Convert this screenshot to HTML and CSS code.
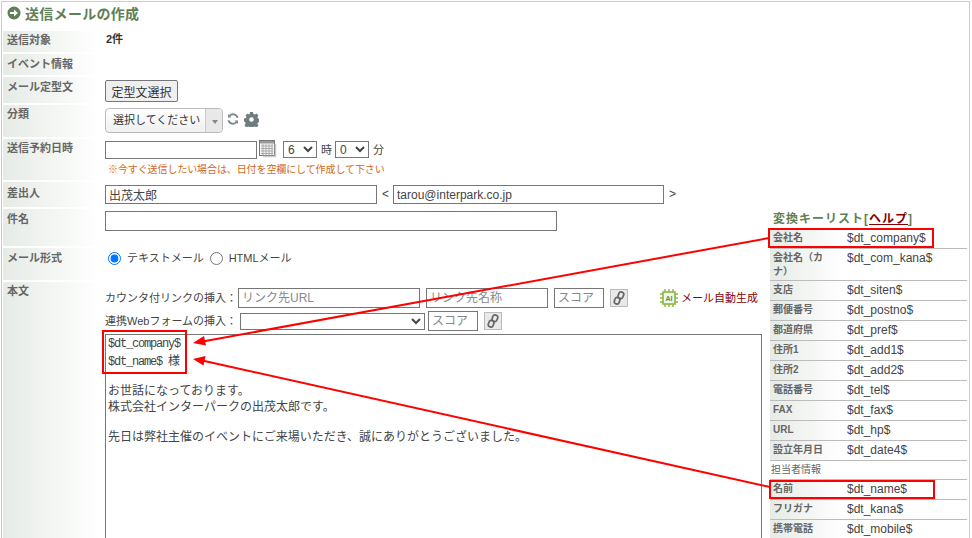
FILE: index.html
```html
<!DOCTYPE html>
<html lang="ja">
<head>
<meta charset="utf-8">
<title>送信メールの作成</title>
<link rel="stylesheet" href="styles.css">
</head>
<body>
<div class="page">
  <h1 class="title"><svg class="title-icon" width="14" height="14" viewBox="0 0 14 14"><circle cx="7" cy="7" r="6.5" fill="#5f7f57"/><path d="M3 6h4V3.6L11 7l-4 3.4V8H3z" fill="#fff"/></svg>送信メールの作成</h1>

  <div class="row r1"><div class="lbl">送信対象</div><div class="val strong">2件</div></div>
  <div class="row r2"><div class="lbl">イベント情報</div><div class="val"></div></div>
  <div class="row r3"><div class="lbl">メール定型文</div><div class="val"><button class="btn" type="button">定型文選択</button></div></div>
  <div class="row r4"><div class="lbl">分類</div><div class="val line">
    <div class="combo"><span class="combo-text">選択してください</span><span class="combo-arrow"></span></div>
    <svg class="ic-refresh" width="12" height="12" viewBox="0 0 12 12"><path d="M10.6 4.8A4.7 4.7 0 0 0 2.4 3" fill="none" stroke="#7d8a8c" stroke-width="1.8"/><path d="M1 1v3.6h3.6z" fill="#7d8a8c"/><path d="M1.4 7.2A4.7 4.7 0 0 0 9.6 9" fill="none" stroke="#7d8a8c" stroke-width="1.8"/><path d="M11 11V7.4H7.4z" fill="#7d8a8c"/></svg>
    <svg class="ic-gear" width="15" height="15" viewBox="0 0 15 15"><path fill-rule="evenodd" fill="#6f7d80" d="M6 0h3l.4 2 1.4.6L12.500 1.500l2 2-1.100 1.700.6 1.400 1.900.4v3l-1.900.4-.6 1.400 1.100 1.700-2 2-1.700-1.100-1.400.6-.4 1.900H6l-.4-1.900-1.400-.6-1.700 1.100-2-2 1.100-1.700L1 9.900 0 9.500v-3l1.900-.4.600-1.400L1.500 3.500l2-2 1.700 1.100L5.600 2zM7.500 5.200a2.300 2.300 0 1 0 0 4.600 2.300 2.300 0 0 0 0-4.600z"/></svg>
  </div></div>
  <div class="row r5"><div class="lbl">送信予約日時</div><div class="val">
    <div class="line date-line">
      <input class="inp w-date" type="text">
      <svg class="ic-cal" width="18" height="18" viewBox="0 0 18 18"><rect x=".5" y=".5" width="15" height="15" fill="#f4f4f4" stroke="#777"/><rect x="1" y="1" width="14" height="2.500" fill="#999"/><path d="M2 6h12M2 8.500h12M2 11h12M2 13.500h12M4 4v11M7 4v11M10 4v11M13 4v11" stroke="#aaa"/><path d="M16.500 4v12.500H4" fill="none" stroke="#ccc" stroke-width="1.500"/></svg>
      <select class="sel w-num"><option>6</option></select><span>時</span>
      <select class="sel w-num"><option>0</option></select><span>分</span>
    </div>
    <div class="note">※今すぐ送信したい場合は、日付を空欄にして作成して下さい</div>
  </div></div>
  <div class="row r6"><div class="lbl">差出人</div><div class="val line">
    <input class="inp w-name" type="text" value="出茂太郎"><span>&lt;</span><input class="inp w-mail" type="text" value="tarou@interpark.co.jp"><span>&gt;</span>
  </div></div>
  <div class="row r7"><div class="lbl">件名</div><div class="val"><input class="inp w-subject" type="text"></div></div>
  <div class="row r8"><div class="lbl">メール形式</div><div class="val line radios">
    <input class="radio" type="radio" name="fmt" checked><span class="radio-text">テキストメール</span>
    <input class="radio" type="radio" name="fmt"><span>HTMLメール</span>
  </div></div>
  <div class="row r9"><div class="lbl">本文</div><div class="val body-val">
    <div class="line link-line">
      <span class="link-label">カウンタ付リンクの挿入：</span>
      <input class="inp w-url" type="text" placeholder="リンク先URL">
      <input class="inp w-linkname" type="text" placeholder="リンク先名称">
      <input class="inp w-score" type="text" placeholder="スコア">
      <span class="chain"><svg width="12" height="14" viewBox="0 0 12 14"><g fill="none" stroke="#666" stroke-width="1.700"><rect x="5.500" y="1" width="5" height="6.500" rx="2.200" transform="rotate(20 8 4)"/><rect x="1.500" y="6.500" width="5" height="6.500" rx="2.200" transform="rotate(20 4 10)"/></g></svg></span>
      <span class="ai"><svg width="18" height="18" viewBox="0 0 18 18"><path d="M5 0v18M9 0v18M13 0v18M0 5h18M0 9h18M0 13h18" stroke="#8fb63c" stroke-width="1.400"/><rect x="3" y="3" width="12" height="12" fill="#eef6f2" stroke="#8fb63c" stroke-width="1.600"/><text x="9" y="11.800" class="ai-text">AI</text></svg><span class="ai-label">メール自動生成</span></span>
    </div>
    <div class="line form-line">
      <span class="form-label">連携Webフォームの挿入：</span>
      <select class="sel w-form"><option></option></select>
      <input class="inp w-score" type="text" placeholder="スコア">
      <span class="chain"><svg width="12" height="14" viewBox="0 0 12 14"><g fill="none" stroke="#666" stroke-width="1.700"><rect x="5.500" y="1" width="5" height="6.500" rx="2.200" transform="rotate(20 8 4)"/><rect x="1.500" y="6.500" width="5" height="6.500" rx="2.200" transform="rotate(20 4 10)"/></g></svg></span>
    </div>
    <div class="editor">
      <div class="mono">$dt_company$</div>
      <div class="mono">$dt_name$ <span class="mono-jp">様</span></div>
      <p class="para">お世話になっております。<br>株式会社インターパークの出茂太郎です。</p>
      <p class="para para-last">先日は弊社主催のイベントにご来場いただき、誠にありがとうございました。</p>
    </div>
  </div></div>

  <aside class="keys">
    <div class="keys-title">変換キーリスト[<a class="help">ヘルプ</a>]</div>
    <div class="k"><div class="kl">会社名</div><div class="kv">$dt_company$</div></div>
    <div class="k k-tall"><div class="kl">会社名（カナ）</div><div class="kv">$dt_com_kana$</div></div>
    <div class="k"><div class="kl">支店</div><div class="kv">$dt_siten$</div></div>
    <div class="k"><div class="kl">郵便番号</div><div class="kv">$dt_postno$</div></div>
    <div class="k"><div class="kl">都道府県</div><div class="kv">$dt_pref$</div></div>
    <div class="k"><div class="kl">住所1</div><div class="kv">$dt_add1$</div></div>
    <div class="k"><div class="kl">住所2</div><div class="kv">$dt_add2$</div></div>
    <div class="k"><div class="kl">電話番号</div><div class="kv">$dt_tel$</div></div>
    <div class="k"><div class="kl">FAX</div><div class="kv">$dt_fax$</div></div>
    <div class="k"><div class="kl">URL</div><div class="kv">$dt_hp$</div></div>
    <div class="k"><div class="kl">設立年月日</div><div class="kv">$dt_date4$</div></div>
    <div class="k k-head"><div class="kh">担当者情報</div></div>
    <div class="k"><div class="kl">名前</div><div class="kv">$dt_name$</div></div>
    <div class="k"><div class="kl">フリガナ</div><div class="kv">$dt_kana$</div></div>
    <div class="k"><div class="kl">携帯電話</div><div class="kv">$dt_mobile$</div></div>
  </aside>

  <svg class="marks" width="972" height="538" viewBox="0 0 972 538">
    <g fill="none" stroke="#f00" stroke-width="2">
      <rect x="769" y="229" width="164" height="18"/>
      <rect x="770" y="481" width="164" height="17"/>
      <rect x="103" y="331" width="83" height="42"/>
      <path d="M769 238 200 342M770 487 200 360"/>
    </g>
    <path d="M193 343l11-7 2 9.500zM193 359l12.500-3-2 9.500z" fill="#f00"/>
  </svg>
</div>
</body>
</html>
```
FILE: styles.css
```css
* { box-sizing: border-box; }
html, body { margin: 0; height: 538px; overflow: hidden; background: #fff; }
body { font-family: "Liberation Sans", "Noto Sans CJK JP", sans-serif; font-size: 12px; color: #444; }
.page { position: relative; height: 538px; margin: 1px 2px 0 1px; padding: 0 0 0 1px; border: 1px solid #ccc; border-bottom: 0; overflow: hidden; }
.title { display: flex; align-items: center; gap: 4px; height: 22px; margin: 0; padding: 0 0 0 4px; font-size: 14px; font-weight: bold; color: #5f7f57; letter-spacing: .3px; }
.row { display: flex; margin-bottom: 2px; padding: 0; }
.lbl { flex: 0 0 97px; padding: 2px 0 0 4px; font-size: 11px; font-weight: bold; color: #666; line-height: 16px; background: linear-gradient(90deg, #e6ebe6, #fff); }
.val { flex: 1; padding-left: 5px; min-width: 0; line-height: 16px; }
.line { display: flex; align-items: center; }
.strong { font-weight: bold; font-size: 11px; padding: 0 0 0 6px; color: #333; }
.r1 { height: 21px; margin-top: 7px; }
.r2 { height: 21px; }
.r3 { height: 26px; }
.r3 .val { padding-top: 3px; }
.r4 { height: 32px; }
.r5 { height: 41px; }
.r6 { height: 25px; }
.r7 { height: 37px; }
.r8 { height: 32px; }
.r9 { height: 300px; }
.r1 .lbl { padding-top: 1px; }
.r4 .lbl, .r5 .lbl, .r9 .lbl { padding-top: 1px; }
.r6 .lbl { padding-top: 3px; }
.btn { display: block; width: 73px; height: 22px; padding: 0; border: 1px solid #767676; border-radius: 2px; background: #efefef; font: 12px "Liberation Sans", "Noto Sans CJK JP", sans-serif; color: #333; }
.r4 .val { align-items: flex-start; padding-top: 3px; }
.combo { display: flex; width: 118px; height: 25px; border: 1px solid #bbb; border-radius: 4px; background: linear-gradient(#fff, #f0f0f0); }
.combo-text { flex: 1; padding: 3px 0 0 7px; font-size: 11px; color: #333; white-space: nowrap; }
.combo-arrow { position: relative; flex: 0 0 17px; border-left: 1px solid #ccc; background: #e8e8e8; border-radius: 0 3px 3px 0; }
.combo-arrow::after { content: ""; position: absolute; left: 6px; top: 11px; border: 3px solid transparent; border-top: 4px solid #888; }
.ic-refresh { margin: 5px 0 0 4px; }
.ic-gear { margin: 4px 0 0 5px; }
.inp { height: 20px; padding: 0 3px; border: 1px solid #767676; border-radius: 0; background: #fff; font: 12px "Liberation Sans", "Noto Sans CJK JP", sans-serif; color: #444; outline: 0; }
.inp::placeholder { color: #888; }
.sel { height: 17px; padding: 0; border: 1px solid #767676; border-radius: 0; background-color: #fff; font: 12px "Liberation Sans", "Noto Sans CJK JP", sans-serif; color: #444; }
.w-date { width: 152px; height: 18px; }
.w-num { width: 34px; }
.ic-cal { margin: -2px 6px 0 2px; }
.date-line { height: 20px; padding-top: 1px; }
.date-line span { margin: 0 3px 0 4px; font-size: 11px; }
.note { margin: 3px 0 0 3px; font-size: 10px; line-height: 16px; color: #d2691e; letter-spacing: -.1px; }
.r6 .val { padding-top: 3px; align-items: flex-start; }
.r6 span { margin: 1px 4px 0 5px; }
.w-name { width: 272px; height: 19px; }
.w-mail { width: 271px; height: 19px; }
.r7 .val { padding-top: 2px; }
.w-subject { width: 452px; }
.radios { height: 20px; font-size: 11px; }
.r8 .val { align-items: center; height: 20px; }
.radio { margin: 0 6px 0 3px; width: 13px; height: 13px; accent-color: #0075ff; }
.radio-text { margin-right: 3px; }
.body-val { padding-top: 6px; font-size: 11px; }
.link-line { height: 20px; }
.link-label { width: 133px; white-space: nowrap; }
.w-url { width: 182px; margin-right: 6px; }
.w-linkname { width: 122px; margin-right: 6px; }
.w-score { width: 50px; }
.chain { display: flex; align-items: center; justify-content: center; width: 18px; height: 18px; margin-left: 6px; border: 1px solid #bbb; background: #e9e9e9; }
.ai { display: flex; align-items: center; margin-left: 32px; }
.ai-text { font: bold 7px "Liberation Sans", sans-serif; fill: #5f8f2a; text-anchor: middle; }
.ai-label { margin-left: 3px; color: #800; white-space: nowrap; }
.form-line { height: 20px; margin-top: 3px; }
.form-label { width: 135px; white-space: nowrap; }
.w-form { width: 185px; height: 17px; margin-right: 3px; }
.editor { width: 657px; height: 260px; margin-top: 3px; padding: 1px 0 0 2px; border: 1px solid #767676; line-height: 16px; font-size: 12px; }
.mono { height: 16px; font: 12px/16px "Liberation Mono", monospace; letter-spacing: -1.2px; }
.mono-jp { font: 12px/16px "Noto Sans CJK JP", sans-serif; letter-spacing: 0; }
.para { margin: 15px 0 0; }
.para-last { margin-top: 14px; }
.keys { position: absolute; left: 768px; top: 209px; width: 197px; background: #fff; }
.keys-title { height: 18px; padding-left: 3px; font-size: 12px; line-height: 16px; font-weight: bold; color: #5f7f57; letter-spacing: 1px; white-space: nowrap; }
.help { color: #800; text-decoration: underline; }
.k { display: flex; height: 20px; border-bottom: 1px solid #bbb; }
.k-tall { height: 32px; }
.k-head { height: 19px; }
.kl { flex: 0 0 73px; padding: 2px 12px 0 3px; font-size: 10px; line-height: 14px; font-weight: bold; color: #666; background: linear-gradient(90deg, #e6ebe6, #fff); }
.kv { padding: 0 0 0 4px; font-size: 12px; line-height: 18px; }
.kh { padding: 2px 0 0 1px; font-size: 10px; line-height: 14px; color: #666; }
.marks { position: absolute; left: -2px; top: -2px; pointer-events: none; }
```
